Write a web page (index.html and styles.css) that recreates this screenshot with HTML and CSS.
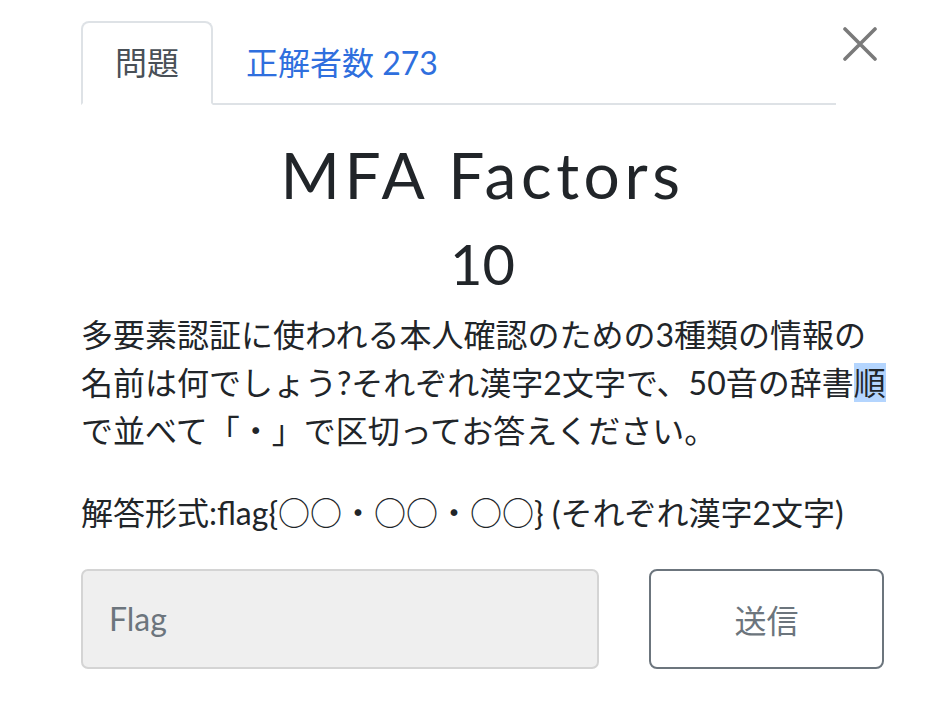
FILE: index.html
```html
<!DOCTYPE html>
<html lang="ja">
<head>
<meta charset="utf-8">
<title>MFA Factors</title>
<link rel="stylesheet" href="styles.css">
</head>
<body>
<div class="modal">
  <div class="head">
    <ul class="tabs">
      <li class="tab active">問題</li>
      <li class="tab link">正解者数 273</li>
    </ul>
    <button class="close" type="button" aria-label="Close">
      <svg width="34" height="34" viewBox="0 0 34 34"><path d="M2 2 L32 32 M32 2 L2 32" stroke="#7a7a7a" stroke-width="3.6" stroke-linecap="round" fill="none"/></svg>
    </button>
  </div>
  <h2 class="name">MFA Factors</h2>
  <h3 class="value">10</h3>
  <div class="desc">
    <p>多要素認証に使われる本人確認のための3種類の情報の名前は何でしょう?それぞれ漢字2文字で、50音の辞書<span class="sel">順</span>で並べて「・」で区切ってお答えください。</p>
    <p>解答形式:flag{<span class="cjk">○○・○○・○○</span>} (それぞれ漢字2文字)</p>
  </div>
  <form class="submit-row">
    <input class="flag" type="text" placeholder="Flag">
    <button class="send" type="button">送信</button>
  </form>
</div>
</body>
</html>
```
FILE: styles.css
```css
html, body {
  margin: 0;
  padding: 0;
  background: #fff;
}
body {
  font-family: "Lato", "Noto Sans CJK JP", sans-serif;
  color: #212529;
}
.modal {
  width: 803px;
  margin-left: 81px;
}
.head {
  display: flex;
  padding-top: 21px;
}
.tabs {
  flex: 1;
  display: flex;
  list-style: none;
  margin: 0;
  padding: 0;
  border-bottom: 2px solid #dee2e6;
}
.tab {
  font-size: 32px;
  line-height: 48px;
  padding: 16px 32px;
  border: 2px solid transparent;
  border-radius: 8px 8px 0 0;
  margin-bottom: -2px;
}
.tab.active {
  border-color: #dee2e6 #dee2e6 #fff;
  color: #495057;
  background: #fff;
}
.tab.link {
  color: #2f6fde;
  padding-left: 31px;
}
.close {
  width: 48px;
  flex: none;
  border: 0;
  background: none;
  padding: 6px 0 0;
  display: flex;
  justify-content: center;
  align-items: flex-start;
}
.name {
  margin: 0 0 16px;
  padding-top: 32px;
  font-size: 64px;
  line-height: 1.2;
  font-weight: 400;
  text-align: center;
  letter-spacing: 4.6px;
}
.value {
  margin: 0 0 14px;
  font-size: 56px;
  line-height: 1.2;
  font-weight: 400;
  text-align: center;
}
.desc {
  margin-right: -6px;
}
.desc p {
  margin: 0 0 32px;
  font-size: 32px;
  line-height: 1.5;
}
.cjk {
  font-family: "Noto Sans CJK JP", sans-serif;
}
.sel {
  background: #b4d5fe;
}
.submit-row {
  display: grid;
  grid-template-columns: 518px 235px;
  column-gap: 50px;
  margin: 0;
}
.flag {
  height: 100px;
  box-sizing: border-box;
  background: #efefef;
  border: 2px solid #d4d4d4;
  border-radius: 7px;
  padding: 0 26px;
  font-family: "Lato", "Noto Sans CJK JP", sans-serif;
  font-size: 32px;
  color: #495057;
  outline: none;
}
.flag::placeholder {
  color: #6c757d;
}
.send {
  height: 100px;
  box-sizing: border-box;
  background: #fff;
  border: 2px solid #6c757d;
  border-radius: 8px;
  font-family: "Lato", "Noto Sans CJK JP", sans-serif;
  font-size: 32px;
  color: #6c757d;
}
```
